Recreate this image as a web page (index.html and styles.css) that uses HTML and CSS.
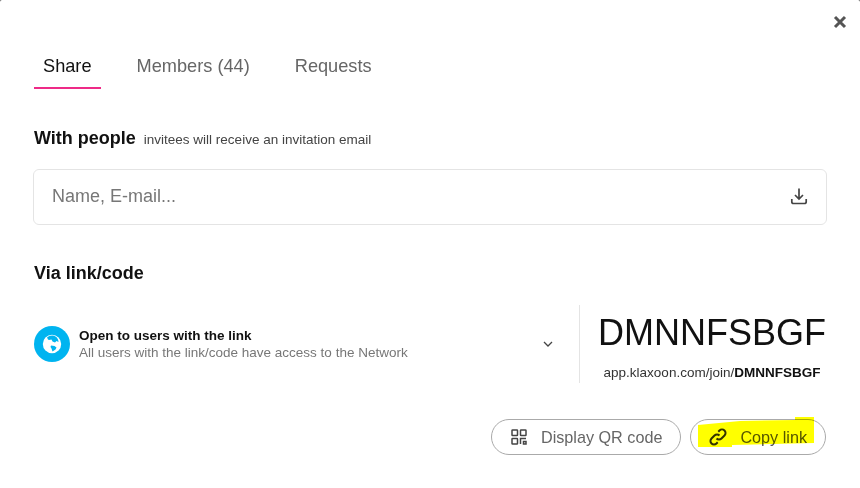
FILE: index.html
```html
<!DOCTYPE html>
<html lang="en">
<head>
    <meta charset="UTF-8">
    <title>Share</title>
    <link rel="stylesheet" href="styles.css">
</head>
<body>
    <div class="modal">
        <button class="close-button" aria-label="Close">
            <svg width="14" height="14" viewBox="0 0 14 14"><path d="M2 2l10 10M12 2L2 12" fill="none" stroke="#555" stroke-width="3"/></svg>
        </button>

        <ul class="tabs">
            <li class="tab active">Share</li>
            <li class="tab">Members (44)</li>
            <li class="tab">Requests</li>
        </ul>

        <div class="people-title">
            <h2>With people</h2>
            <span>invitees will receive an invitation email</span>
        </div>
        <div class="people-input">
            <span>Name, E-mail...</span>
            <svg width="20" height="20" viewBox="0 0 20 20" fill="none" stroke="#444" stroke-width="1.7"><path d="M10 2.500v10.500M6 9l4 4 4-4M2.800 13v2.700c0 1 .8 1.800 1.800 1.800h10.800c1 0 1.800-.8 1.800-1.800V13"/></svg>
        </div>

        <h2 class="link-title">Via link/code</h2>
        <div class="link-row">
            <div class="access">
                <div class="globe">
                    <svg width="20" height="20" viewBox="0 0 20 20"><circle cx="10" cy="10" r="9.200" fill="#fff"/><path d="M5 3.500C7 1.500 11 .5 13.500 2.500c2 1 3 3.500 3 5.500l-2-1-1.500 1.500-2.500-1-1-2-2.500.5-1-.5zM9 11.500l3.500.5 2 1.500-1 2-3 2-1-3-1-1.500z" fill="#00b4f0"/></svg>
                </div>
                <div class="access-text">
                    <strong>Open to users with the link</strong>
                    <span>All users with the link/code have access to the Network</span>
                </div>
                <svg class="chevron" width="12" height="8" viewBox="0 0 12 8"><path d="M2 2l4 4 4-4" fill="none" stroke="#444" stroke-width="1.300"/></svg>
            </div>
            <div class="code">
                <div class="code-value">DMNNFSBGF</div>
                <div class="code-url">app.klaxoon.com/join/<b>DMNNFSBGF</b></div>
            </div>
        </div>

        <div class="actions">
            <button class="pill">
                <svg width="16" height="16" viewBox="0 0 16 16" fill="none" stroke="#444" stroke-width="1.500"><rect x="1" y="1" width="5.500" height="5.500" rx=".6"/><rect x="9.500" y="1" width="5.500" height="5.500" rx=".6"/><rect x="1" y="9.500" width="5.500" height="5.500" rx=".6"/><path d="M9.500 15v-5.500h5.500M12.500 12.500h2.500V15h-2.500z"/></svg>
                Display QR code
            </button>
            <button class="pill copy">
                <svg width="20" height="20" viewBox="0 0 20 20" fill="none" stroke="#333" stroke-width="2"><path d="M8.500 11.500a3.500 3.500 0 0 0 5 0l3-3a3.500 3.500 0 0 0-5-5l-1.200 1.200M11.500 8.500a3.500 3.500 0 0 0-5 0l-3 3a3.500 3.500 0 0 0 5 5l1.200-1.200"/></svg>
                Copy link
            </button>
            <div class="highlight"></div>
        </div>
    </div>
</body>
</html>
```

FILE: styles.css
```css
* {
    box-sizing: border-box;
}

body {
    margin: 0;
    font-family: 'Liberation Sans', Arial, sans-serif;
    background-color: #555;
    color: #111;
}

.modal {
    position: relative;
    width: 860px;
    height: 488px;
    padding: 44px 34px 0;
    overflow: hidden;
    background-color: #fff;
    border-radius: 2px 2px 0 0;
}

.close-button {
    position: absolute;
    top: 15px;
    right: 13px;
    padding: 0;
    border: none;
    background: none;
    display: flex;
}

.tabs {
    list-style: none;
    margin: 0;
    padding: 0;
    display: flex;
    gap: 27px;
}

.tab {
    height: 45px;
    padding: 0 9px;
    font-size: 18.2px;
    line-height: 44px;
    color: #666;
}

.tab.active {
    color: #111;
    border-bottom: 2px solid #ee2a87;
}

.people-title {
    margin-top: 39px;
    display: flex;
    align-items: baseline;
    gap: 8px;
}

h2 {
    margin: 0;
    font-size: 18px;
    font-weight: bold;
    color: #111;
}

.people-title span {
    font-size: 13.5px;
    color: #444;
}

.people-input {
    margin: 20px -1px 0;
    height: 56px;
    padding: 0 17px 2px 18px;
    border: 1px solid #e4e4e4;
    border-radius: 6px;
    display: flex;
    align-items: center;
    justify-content: space-between;
    font-size: 18px;
    color: #777;
}

.link-title {
    margin-top: 38px;
}

.link-row {
    margin-top: 21px;
    display: flex;
    justify-content: space-between;
    height: 78px;
}

.access {
    width: 546px;
    border-right: 1px solid #e4e4e4;
    display: flex;
    align-items: center;
    gap: 9px;
}

.globe {
    width: 36px;
    height: 36px;
    border-radius: 50%;
    background-color: #00b4f0;
    display: flex;
    align-items: center;
    justify-content: center;
}

.access-text {
    flex: 1;
    display: flex;
    flex-direction: column;
    font-size: 13.5px;
    line-height: 17px;
    color: #777;
}

.access-text strong {
    color: #111;
}

.chevron {
    margin-right: 25px;
}

.code {
    width: 228px;
    text-align: center;
    white-space: nowrap;
}

.code-value {
    font-size: 36px;
    line-height: 56px;
    color: #111;
}

.code-url {
    font-size: 13.5px;
    line-height: 24px;
    color: #333;
}

.code-url b {
    color: #111;
}

.actions {
    position: relative;
    margin-top: 36px;
    display: flex;
    justify-content: flex-end;
    gap: 9px;
}

.pill {
    height: 36px;
    padding: 0 18px 0 19px;
    border: 1px solid #aaa;
    border-radius: 18px;
    background: #fff;
    display: flex;
    align-items: center;
    gap: 14px;
    font-family: inherit;
    font-size: 16.2px;
    color: #666;
}

.pill.copy {
    padding: 0 18px 0 17px;
    gap: 12px;
    color: #555;
}

/* marker scribble over the copy button */
.highlight {
    position: absolute;
    top: -2px;
    right: 12px;
    width: 116px;
    height: 30px;
    background-color: #ffff00;
    mix-blend-mode: multiply;
    clip-path: polygon(0 8px, 42px 4px, 97px 3px, 97px 0, 116px 0, 116px 26px, 34px 28px, 34px 30px, 0 30px);
}
```
